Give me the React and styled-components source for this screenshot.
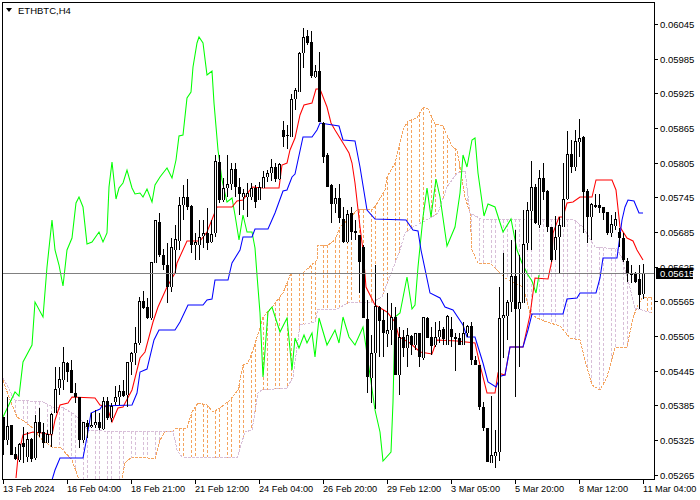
import React from "react";
import styled, { createGlobalStyle } from "styled-components";

// all chart data is in page pixels, the svg viewBox below keeps them as they are
const BAR_STEP = 4;
const FIRST_BAR = 3;

// [high, low, bodyTop, bodyBottom, bullish]
const candles = [
  [417,455,417,440,0],[397,445,426,440,1],[425,455,425,455,0],[447,460,454,459,0],[443,462,444,460,1],
  [427,463,443,447,0],[432,462,439,457,1],[438,462,439,459,0],[415,460,422,458,1],[408,437,422,433,0],
  [423,448,432,443,0],[430,443,434,443,1],[413,447,414,434,1],[367,413,389,413,1],[367,395,379,388,1],
  [347,390,362,380,1],[362,382,363,372,0],[360,393,370,393,0],[383,403,393,397,0],[397,448,397,440,0],
  [422,443,422,440,1],[420,438,423,427,0],[413,428,425,427,1],[410,428,422,425,1],[413,430,422,428,0],
  [397,430,401,429,1],[397,420,401,418,0],[403,422,406,418,1],[386,405,397,402,1],[385,405,391,397,1],
  [380,397,391,396,0],[362,407,362,395,1],[352,375,353,362,1],[327,365,343,353,1],[297,345,301,343,1],
  [291,309,301,308,0],[298,319,307,318,0],[262,320,262,318,1],[220,263,220,263,1],[213,257,222,255,0],
  [249,270,255,265,0],[243,303,265,287,0],[238,292,247,287,1],[225,274,239,250,1],[197,250,205,241,1],
  [185,220,197,205,1],[179,210,197,207,0],[205,253,206,245,0],[233,260,242,245,1],[220,260,237,245,1],
  [220,248,233,236,1],[208,250,233,243,0],[220,243,234,242,1],[155,237,161,233,1],[155,203,162,200,0],
  [178,202,188,200,1],[155,197,184,188,1],[163,190,169,184,1],[163,197,169,187,0],[178,215,187,194,0],
  [189,210,193,197,1],[183,217,193,197,1],[183,200,188,197,1],[185,208,188,202,0],[182,200,187,200,1],
  [171,188,177,188,1],[170,182,173,177,1],[159,181,167,173,1],[163,182,167,179,0],[163,180,164,179,1],
  [121,147,130,137,0],[125,149,135,136,1],[94,137,99,137,1],[88,110,90,99,1],[52,92,53,92,1],
  [28,68,37,53,1],[30,45,36,43,0],[31,78,42,76,0],[65,78,71,77,1],[52,122,71,122,0],
  [122,163,123,157,0],[153,187,155,187,0],[184,223,185,204,0],[188,213,198,204,1],[184,223,198,218,0],
  [207,243,219,242,0],[210,243,214,242,1],[207,240,213,232,0],[220,240,231,233,0],[235,293,235,262,0],
  [245,318,247,318,0],[300,393,319,377,0],[335,403,353,378,1],[265,409,306,353,1],[306,357,307,321,0],
  [310,357,320,333,0],[293,347,330,334,1],[303,345,317,330,1],[307,375,317,375,0],[327,395,337,375,1],
  [330,357,337,348,0],[328,367,335,348,1],[335,355,336,345,0],[333,350,333,345,1],[333,367,333,357,0],
  [317,360,317,358,1],[317,338,318,338,0],[327,355,337,346,0],[322,347,337,345,1],[321,343,330,337,1],
  [327,345,329,339,0],[315,345,316,345,1],[317,347,329,337,0],[333,371,337,339,0],[333,345,338,345,0],
  [322,345,333,345,1],[325,337,326,333,1],[322,365,326,360,0],[356,365,360,365,0],[365,410,365,407,0],
  [402,431,407,428,0],[428,462,428,462,0],[396,463,455,463,1],[430,468,452,456,1],[287,461,318,452,1],
  [253,358,315,318,1],[300,340,302,316,1],[240,312,276,302,1],[230,397,276,309,0],[255,367,302,309,1],
  [210,303,244,303,1],[202,250,210,243,1],[161,250,187,211,1],[184,224,187,223,0],[170,228,178,225,1],
  [163,200,178,192,0],[190,232,191,227,0],[227,262,227,260,0],[216,260,237,250,1],[217,273,225,237,1],
  [163,227,199,227,1],[131,200,154,199,1],[140,173,154,167,0],[130,171,141,167,1],[119,157,138,142,1],
  [136,233,137,192,0],[189,243,191,217,0],[203,240,204,217,1],[194,208,205,207,0],[194,213,205,208,0],
  [207,220,207,213,0],[212,235,212,233,0],[215,237,224,233,1],[212,230,219,226,1],[228,247,232,238,0],
  [233,262,238,260,0],[258,282,261,273,0],[265,283,273,275,0],[272,283,273,282,0],[265,309,279,295,0],
  [264,299,273,294,1],
];

const chikou = [
  [3,417],[15,392],[19,396],[23,362],[32,345],[35,302],[43,317],[47,267],[52,220],[55,250],[59,265],[63,286],
  [67,250],[72,238],[76,203],[79,197],[83,207],[87,244],[92,242],[99,232],[103,242],[107,233],[109,187],[112,162],
  [116,199],[119,188],[123,183],[127,170],[132,188],[135,194],[140,193],[143,197],[147,189],[152,202],[155,185],
  [160,177],[167,168],[172,178],[176,160],[179,136],[183,135],[187,98],[191,92],[193,67],[197,43],[199,37],[203,43],
  [207,75],[212,71],[214,103],[218,150],[222,180],[227,202],[232,198],[235,215],[239,240],[243,215],[247,232],
  [252,232],[255,248],[257,275],[260,313],[263,377],[268,312],[272,307],[280,332],[287,318],[292,370],[295,338],
  [299,348],[304,335],[307,343],[312,333],[315,357],[319,318],[327,345],[335,330],[339,343],[343,317],[349,337],
  [355,345],[363,327],[366,347],[375,410],[380,432],[383,461],[391,452],[393,402],[395,317],[400,313],[407,277],
  [412,309],[415,305],[418,267],[423,217],[427,188],[431,217],[436,179],[440,197],[447,246],[455,227],[460,193],
  [463,155],[467,167],[472,140],[475,138],[478,173],[484,216],[488,204],[495,207],[503,232],[511,219],[517,250],
  [522,263],[528,275],[532,281],[536,293],[539,275],
];

const tenkan = [
  [16,478],[18,457],[23,435],[33,432],[42,433],[52,435],[55,420],[60,405],[68,403],[72,397],[95,398],[100,405],
  [107,407],[112,422],[118,408],[123,407],[132,390],[140,358],[145,352],[153,322],[158,307],[167,287],[175,273],
  [177,263],[187,241],[200,241],[207,232],[213,217],[217,207],[232,207],[237,201],[243,200],[252,187],[263,188],
  [279,188],[282,165],[287,163],[290,150],[295,138],[300,115],[304,105],[312,103],[316,89],[320,89],[327,107],
  [331,123],[335,130],[343,143],[349,153],[352,163],[355,183],[360,227],[363,250],[366,287],[370,295],[375,305],
  [387,312],[395,322],[399,337],[410,343],[420,352],[432,354],[437,340],[457,341],[475,343],[480,365],[487,393],
  [495,393],[498,373],[505,375],[510,347],[523,347],[530,315],[535,278],[548,279],[552,260],[553,233],[559,217],
  [563,217],[567,203],[573,202],[580,197],[592,197],[596,180],[612,180],[616,190],[620,227],[627,238],[633,241],
  [637,250],[643,260],
];

const kijun = [
  [52,480],[55,470],[60,458],[83,458],[87,437],[91,413],[100,409],[102,406],[132,405],[137,393],[140,372],[147,369],
  [154,340],[159,330],[175,330],[180,322],[188,305],[203,305],[207,300],[212,299],[215,280],[228,280],[232,263],
  [240,250],[243,237],[252,237],[255,229],[268,229],[275,213],[283,191],[287,190],[292,177],[295,174],[303,137],
  [312,137],[317,130],[320,123],[339,126],[343,140],[355,141],[360,167],[367,210],[375,219],[406,220],[413,230],
  [418,231],[421,250],[430,293],[440,298],[445,307],[453,310],[463,325],[467,337],[475,337],[483,363],[488,382],
  [496,387],[501,376],[505,375],[510,347],[523,347],[528,330],[532,314],[563,314],[567,299],[577,298],[580,293],
  [596,293],[600,278],[603,258],[617,258],[622,220],[625,207],[628,200],[634,201],[639,213],[643,213],
];

const spanA = [
  [3,380],[10,400],[17,417],[25,422],[33,428],[42,440],[52,447],[60,447],[72,460],[78,477],[85,492],[115,492],
  [122,478],[125,463],[132,457],[140,457],[155,459],[160,440],[165,432],[173,431],[177,428],[187,428],[192,412],
  [198,403],[207,405],[213,412],[220,408],[230,400],[238,390],[243,365],[248,363],[253,350],[260,328],[263,317],
  [272,307],[283,293],[291,273],[303,273],[317,260],[318,245],[328,245],[335,240],[340,227],[350,218],[357,210],
  [373,209],[378,202],[385,190],[387,177],[395,163],[403,130],[408,121],[417,118],[423,107],[428,109],[435,124],
  [443,126],[452,146],[457,150],[460,167],[465,197],[470,213],[472,250],[478,263],[490,263],[505,278],[523,287],
  [530,313],[537,318],[547,322],[560,326],[570,338],[580,340],[585,360],[592,385],[600,390],[607,377],[615,348],
  [627,347],[633,318],[637,307],[642,298],[652,297],
];

const spanB = [
  [3,378],[15,400],[43,402],[53,407],[62,407],[75,415],[83,422],[87,430],[103,431],[167,432],[173,431],[177,450],
  [182,457],[237,458],[245,432],[252,430],[258,393],[262,390],[287,388],[293,377],[300,325],[315,322],[318,309],
  [337,309],[348,303],[373,302],[382,297],[400,250],[405,233],[413,227],[432,217],[438,213],[447,187],[457,173],
  [465,171],[470,213],[483,220],[523,219],[573,219],[583,227],[595,247],[617,249],[622,258],[628,280],[635,308],
  [652,313],
];

const priceLabels = ["0.06045","0.05985","0.05925","0.05865","0.05805","0.05745","0.05685","0.05625","0.05565","0.05505","0.05445","0.05385","0.05325","0.05265"];
const timeLabels = ["13 Feb 2024","16 Feb 04:00","18 Feb 21:00","21 Feb 12:00","24 Feb 04:00","26 Feb 20:00","29 Feb 12:00","3 Mar 05:00","5 Mar 20:00","8 Mar 12:00","11 Mar 04:00"];

const toPoints = (series) => series.map((p) => p.join(",")).join(" ");

// value of a polyline at x
const yAt = (series, x) => {
  for (let i = 1; i < series.length; i++) {
    const [x0, y0] = series[i - 1];
    const [x1, y1] = series[i];
    if (x <= x1) return y0 + ((y1 - y0) * (x - x0)) / (x1 - x0);
  }
  return series[series.length - 1][1];
};

// cloud columns stand on the bars, every third one is missing in the picture
const cloudHatch = () => {
  const bars = [];
  for (let x = FIRST_BAR; x <= 652; x += BAR_STEP) {
    if (x % 12 === 7) continue;
    const a = yAt(spanA, x);
    const b = yAt(spanB, x);
    bars.push({ x, top: Math.min(a, b), bottom: Math.max(a, b), color: a < b ? "#f4a460" : "#d8bfd8" });
  }
  return bars;
};

const GlobalStyle = createGlobalStyle`
  html, body {
    margin: 0;
    background: #fff;
    overflow: hidden;
  }
`;

const Chart = styled.div`
  width: 700px;
  height: 500px;
  box-sizing: border-box;
  padding: 2px 0 0 2px;
  display: grid;
  grid-template-columns: 653px 45px;
  grid-template-rows: 478px 20px;
  background: #fff;
  color: #000;
  font: 9.5px "Liberation Sans", Arial, sans-serif;
`;

const Plot = styled.div`
  position: relative;
  border: 1px solid #000;
  overflow: hidden;
`;

const PlotSvg = styled.svg`
  display: block;
  shape-rendering: crispEdges;
`;

const Line = styled.polyline`
  fill: none;
  stroke: ${(p) => p.$color};
  stroke-width: 1;
  stroke-dasharray: ${(p) => p.$dash || "none"};
`;

const Curve = styled(Line)`
  shape-rendering: auto;
  stroke-width: 1.05;
`;

const Legend = styled.div`
  position: absolute;
  left: 3px;
  top: 1px;
  display: flex;
  align-items: center;
  gap: 6px;
  height: 12px;
`;

const LegendArrow = styled.span`
  width: 0;
  height: 0;
  border-left: 3.5px solid transparent;
  border-right: 3.5px solid transparent;
  border-top: 4px solid #000;
`;

const PriceAxis = styled.div`
  position: relative;
  padding-top: 5px;
`;

const PriceTick = styled.div`
  height: 34.68px;
  display: flex;
  align-items: center;
  gap: 2px;
  &::before {
    content: "";
    width: 3px;
    height: 1px;
    background: #000;
  }
`;

const PriceTag = styled.div`
  position: absolute;
  left: 1px;
  top: 266px;
  width: 33px;
  height: 11px;
  padding-left: 4px;
  line-height: 11px;
  background: #000;
  color: #fff;
`;

const TimeAxis = styled.div`
  grid-column: 1 / 3;
  display: grid;
  grid-auto-flow: column;
  grid-auto-columns: 64px;
  padding-left: 1px;
  font-size: 9.2px;
`;

const TimeTick = styled.div`
  white-space: nowrap;
  line-height: 11px;
  &::before {
    content: "";
    display: block;
    width: 1px;
    height: 4px;
    background: #000;
  }
`;

const Candle = ({ x, bar }) => {
  const [high, low, top, bottom, bull] = bar;
  return (
    <g>
      <rect x={x} y={high} width={1} height={low - high} fill="#000" />
      <rect x={x - 1} y={top} width={3} height={Math.max(bottom - top, 1)} fill="#000" />
      {bull && bottom - top > 1 ? (
        <rect x={x} y={top + 1} width={1} height={bottom - top - 1} fill="#fff" />
      ) : null}
    </g>
  );
};

const App = () => (
  <Chart>
    <GlobalStyle />
    <Plot>
      <PlotSvg width="651" height="476" viewBox="3 3 651 476">
        {cloudHatch().map((b) => (
          <Line key={b.x} points={`${b.x},${b.top} ${b.x},${b.bottom}`} $color={b.color} $dash="3 2" />
        ))}
        <Line points={toPoints(spanA)} $color="#f4a460" $dash="3 1" />
        <Line points={toPoints(spanB)} $color="#d8bfd8" $dash="3 1" />
        <Curve points={toPoints(chikou)} $color="#00ff00" />
        <Curve points={toPoints(tenkan)} $color="#ff0000" />
        <Curve points={toPoints(kijun)} $color="#0000ff" />
        {candles.map((bar, i) => (
          <Candle key={i} x={FIRST_BAR + BAR_STEP * i} bar={bar} />
        ))}
        <Line points="3,273 654,273" $color="#808080" />
      </PlotSvg>
      <Legend>
        <LegendArrow />
        <span>ETHBTC,H4</span>
      </Legend>
    </Plot>
    <PriceAxis>
      {priceLabels.map((label) => (
        <PriceTick key={label}>{label}</PriceTick>
      ))}
      <PriceTag>0.05615</PriceTag>
    </PriceAxis>
    <TimeAxis>
      {timeLabels.map((label) => (
        <TimeTick key={label}>{label}</TimeTick>
      ))}
    </TimeAxis>
  </Chart>
);

export default App;
